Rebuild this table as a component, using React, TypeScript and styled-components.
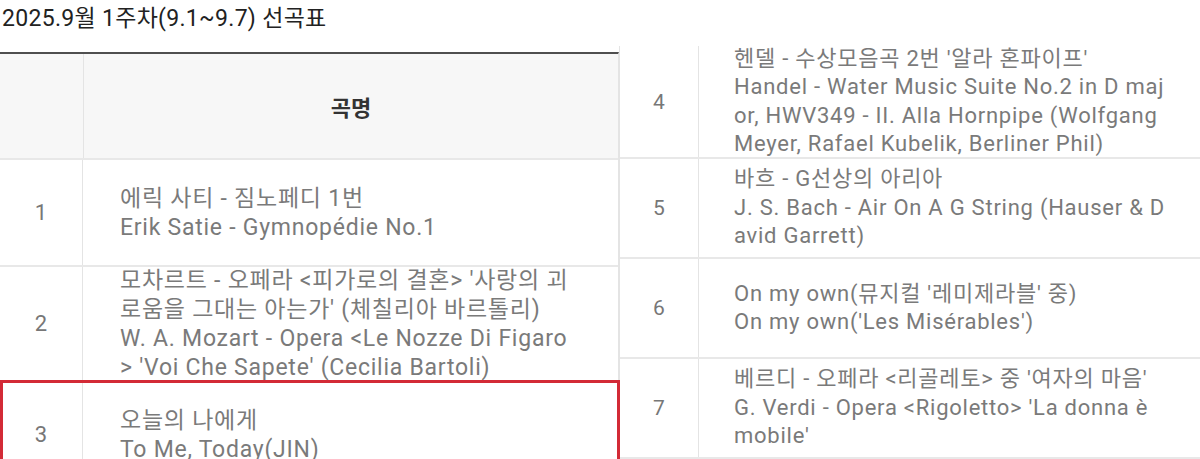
import React from 'react'
import styled, { createGlobalStyle, css } from 'styled-components'

const GlobalStyle = createGlobalStyle`
  html, body {
    margin: 0;
    padding: 0;
    background: #ffffff;
  }
  body {
    width: 1200px;
    height: 459px;
    overflow: hidden;
    font-family: Roboto, "Noto Sans CJK KR", sans-serif;
  }
`

type Song = {
  no: number
  lines: string[]
  highlighted?: boolean
}

const leftSongs: Song[] = [
  { no: 1, lines: ['에릭 사티 - 짐노페디 1번', 'Erik Satie - Gymnopédie No.1'] },
  {
    no: 2,
    lines: [
      "모차르트 - 오페라 <피가로의 결혼> '사랑의 괴",
      "로움을 그대는 아는가' (체칠리아 바르톨리)",
      'W. A. Mozart - Opera <Le Nozze Di Figaro',
      "> 'Voi Che Sapete' (Cecilia Bartoli)",
    ],
  },
  { no: 3, lines: ['오늘의 나에게', 'To Me, Today(JIN)'], highlighted: true },
]

const rightSongs: Song[] = [
  {
    no: 4,
    lines: [
      "헨델 - 수상모음곡 2번 '알라 혼파이프'",
      'Handel - Water Music Suite No.2 in D maj',
      'or, HWV349 - II. Alla Hornpipe (Wolfgang',
      'Meyer, Rafael Kubelik, Berliner Phil)',
    ],
  },
  {
    no: 5,
    lines: ['바흐 - G선상의 아리아', 'J. S. Bach - Air On A G String (Hauser & D', 'avid Garrett)'],
  },
  { no: 6, lines: ["On my own(뮤지컬 '레미제라블' 중)", "On my own('Les Misérables')"] },
  {
    no: 7,
    lines: ["베르디 - 오페라 <리골레토> 중 '여자의 마음'", "G. Verdi - Opera <Rigoletto> 'La donna è", "mobile'"],
  },
]

const Page = styled.div`
  display: flex;
  width: 1200px;
  height: 459px;
  overflow: hidden;
`

const LeftShot = styled.section`
  width: 619px;
  flex-shrink: 0;
  display: flex;
  flex-direction: column;
`

const RightShot = styled.section`
  flex: 1;
  padding-top: 46px;
  display: flex;
  flex-direction: column;
`

const Title = styled.h1`
  margin: 0 0 14px 2px;
  height: 38px;
  line-height: 38px;
  font-size: 23px;
  font-weight: 400;
  color: #222222;
  letter-spacing: 0.3px;
  white-space: nowrap;
`

const Table = styled.div<{ $compact?: boolean }>`
  display: flex;
  flex-direction: column;
  border-top: ${({ $compact }) => ($compact ? 'none' : '2px solid #4f4f4f')};
  border-right: ${({ $compact }) => ($compact ? 'none' : '1px solid #e4e4e4')};
  border-left: ${({ $compact }) => ($compact ? '1px solid #e4e4e4' : 'none')};
`

const HeaderRow = styled.div`
  display: grid;
  grid-template-columns: 83px 1fr;
  height: 104px;
  background: #f7f7f7;
  border-bottom: 2px solid #e8e8e8;
`

const HeaderCell = styled.div`
  display: flex;
  align-items: center;
  justify-content: center;
  font-size: 22px;
  font-weight: 700;
  color: #333333;
  & + & {
    border-left: 1px solid #e4e4e4;
  }
`

const Row = styled.div<{ $compact?: boolean; $highlighted?: boolean }>`
  position: relative;
  display: grid;
  grid-template-columns: ${({ $compact }) => ($compact ? '79px 1fr' : '83px 1fr')};
  min-height: ${({ $compact }) => ($compact ? '98px' : '105px')};
  border-bottom: 2px solid #e8e8e8;
  flex-shrink: 0;

  ${({ $highlighted }) =>
    $highlighted &&
    css`
      &::after {
        content: '';
        position: absolute;
        left: 0;
        right: -2px;
        top: -2px;
        height: 78px;
        border: 3px solid #d32a36;
        pointer-events: none;
      }
    `}
`

const NumCell = styled.div<{ $compact?: boolean }>`
  display: flex;
  align-items: center;
  justify-content: center;
  font-size: ${({ $compact }) => ($compact ? '21px' : '22px')};
  color: #777777;
  border-right: 1px solid #e4e4e4;
`

const TitleCell = styled.div<{ $compact?: boolean }>`
  display: flex;
  flex-direction: column;
  justify-content: center;
  margin: -1.5px 0;
  padding-left: ${({ $compact }) => ($compact ? '35px' : '37px')};
  font-size: ${({ $compact }) => ($compact ? '22px' : '23px')};
  line-height: ${({ $compact }) => ($compact ? '28.5px' : '29px')};
  letter-spacing: 0.75px;
  color: #7a7a7a;
  white-space: nowrap;
`

const Line = styled.span`
  display: block;
`

const SongRow: React.FC<{ song: Song; compact?: boolean }> = ({ song, compact }) => (
  <Row $compact={compact} $highlighted={song.highlighted}>
    <NumCell $compact={compact}>{song.no}</NumCell>
    <TitleCell $compact={compact}>
      {song.lines.map((line, i) => (
        <Line key={i}>{line}</Line>
      ))}
    </TitleCell>
  </Row>
)

const App: React.FC = () => {
  return (
    <>
      <GlobalStyle />
      <Page>
        <LeftShot>
          <Title>2025.9월 1주차(9.1~9.7) 선곡표</Title>
          <Table>
            <HeaderRow>
              <HeaderCell />
              <HeaderCell>곡명</HeaderCell>
            </HeaderRow>
            {leftSongs.map(song => (
              <SongRow key={song.no} song={song} />
            ))}
          </Table>
        </LeftShot>
        <RightShot>
          <Table $compact>
            {rightSongs.map(song => (
              <SongRow key={song.no} song={song} compact />
            ))}
          </Table>
        </RightShot>
      </Page>
    </>
  )
}

export default App
